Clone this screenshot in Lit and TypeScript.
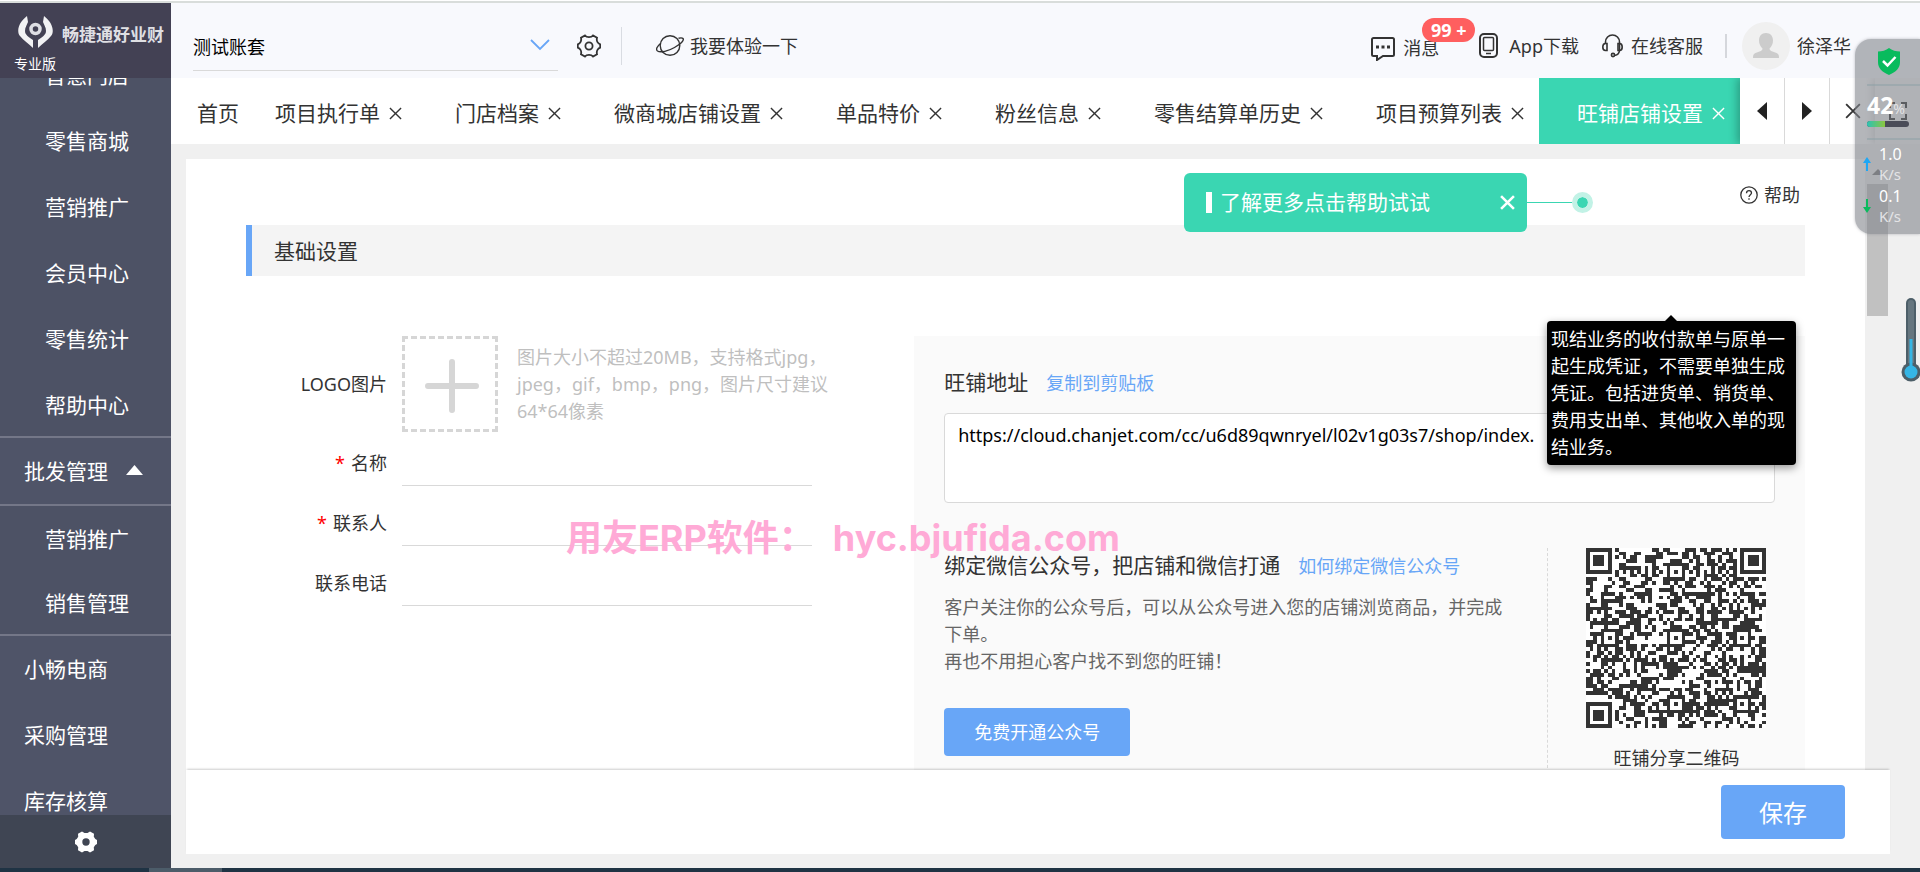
import { LitElement, html, css, svg } from "lit";
import { customElement, property, state } from "lit/decorators.js";
import { classMap } from "lit/directives/class-map.js";

const FONT = css`"Noto Sans", "Noto Sans CJK SC", sans-serif`;

const closeIcon = (size: number, weight = 1.5) => svg`
  <svg width=${size} height=${size} viewBox="0 0 14 14" fill="none" stroke="currentColor" stroke-width=${weight} aria-hidden="true">
    <path d="M1 1 13 13M13 1 1 13" />
  </svg>`;

/** Sidebar navigation, with the brand block above and the settings button below. */
@customElement("side-nav")
export class SideNav extends LitElement {
  static styles = css`
    :host {
      display: flex;
      flex-direction: column;
      flex: 0 0 171px;
      min-height: 0;
      background: #4f5468;
      color: #fff;
      font-family: ${FONT};
    }
    .brand {
      position: relative;
      z-index: 1;
      flex: 0 0 75px;
      box-sizing: border-box;
      padding: 12px 0 0 14px;
      background: #434154;
    }
    .logo {
      display: flex;
      align-items: center;
      gap: 8px;
      height: 34px;
      padding-left: 3px;
      font-size: 17px;
      line-height: 20px;
      font-weight: 700;
      color: #dfdfe3;
      white-space: nowrap;
    }
    .name {
      padding-top: 6px;
    }
    .edition {
      margin: 6px 0 0;
      font-size: 14px;
      line-height: 18px;
    }
    nav {
      flex: 1;
      min-height: 0;
      overflow: hidden;
      display: flex;
      flex-direction: column;
      justify-content: flex-end;
    }
    ul {
      list-style: none;
      margin: 0;
      padding: 0;
      flex: none;
    }
    .sub {
      background: #4d5265;
      border-bottom: 2px solid #747788;
    }
    .group {
      border-bottom: 2px solid #747788;
    }
    a {
      display: flex;
      align-items: center;
      gap: 18px;
      box-sizing: border-box;
      height: 66px;
      padding: 0 0 2px 24px;
      font-size: 21px;
      color: #fff;
      text-decoration: none;
      white-space: nowrap;
    }
    .sub a {
      height: 64px;
      padding: 0 0 0 45px;
    }
    .sub.long a {
      height: 66px;
      padding-top: 2px;
    }
    .tail {
      margin-bottom: -19px;
    }
    .settings {
      position: relative;
      flex: 0 0 53px;
      padding: 0;
      border: 0;
      background: #3f4553;
      color: #fff;
    }
    .settings svg {
      display: block;
      margin: auto;
    }
  `;

  render() {
    const link = (t: string) => html`<li><a href="#">${t}</a></li>`;
    return html`
      <div class="brand">
        <div class="logo">
          <svg width="37" height="32" viewBox="0 0 37 32" fill="none" aria-hidden="true">
            <path d="M10 0C2 6-1 15 3 20c3 4 9 8 13 12v-8c-4-3-8-5-8-9 0-4 2-6 3-9zM27 0c8 6 11 15 7 20-3 4-9 8-13 12v-8c4-3 8-5 8-9 0-4-2-6-3-9z" fill="#f2f2f4" />
            <circle cx="18.500" cy="13" r="4.500" stroke="#dedee4" stroke-width="3.500" />
          </svg>
          <span class="name">畅捷通好业财</span>
        </div>
        <p class="edition">专业版</p>
      </div>
      <nav aria-label="主导航">
        <ul class="sub long">
          ${["智慧门店", "零售商城", "营销推广", "会员中心", "零售统计", "帮助中心"].map(link)}
        </ul>
        <ul class="group">
          <li>
            <a href="#">批发管理
              <svg width="17" height="10" viewBox="0 0 17 10" aria-hidden="true"><path d="M8.500 0 17 10H0z" fill="#fff" /></svg>
            </a>
          </li>
        </ul>
        <ul class="sub">${["营销推广", "销售管理"].map(link)}</ul>
        <ul class="tail">${["小畅电商", "采购管理", "库存核算"].map(link)}</ul>
      </nav>
      <button class="settings" aria-label="设置">
        <svg width="22" height="22" viewBox="0 0 22 22" aria-hidden="true">
          <path fill="#fff" fill-rule="evenodd" d="M7 .5 9.500 2h3L15 .5l4 2.200-.2 3L20.300 8 22 9v4l-1.700 1-1.500 2.300.2 3-4 2.200-2.500-1.500h-3L7 21.500l-4-2.200.2-3L1.700 14 0 13V9l1.700-1 1.500-2.300-.2-3zM11 7.300a3.700 3.700 0 1 0 0 7.400 3.700 3.700 0 0 0 0-7.400z" />
        </svg>
      </button>
    `;
  }
}

/** Account picker and the global tools of the header. */
@customElement("top-bar")
export class TopBar extends LitElement {
  static styles = css`
    :host {
      display: flex;
      align-items: center;
      flex: 0 0 75px;
      box-sizing: border-box;
      padding: 10px 69px 0 22px;
      background: #f8f9fd;
      color: #333;
      font-family: ${FONT};
      font-size: 18px;
      line-height: 26px;
      white-space: nowrap;
    }
    .picker {
      position: relative;
      flex: 0 1 365px;
      align-self: flex-start;
      margin-top: 9px;
      display: flex;
      align-items: center;
      border-bottom: 1px solid #d9d9d9;
      box-sizing: border-box;
      height: 49px;
    }
    select {
      flex: 1;
      height: 48px;
      padding: 2px 0 0;
      border: 0;
      background: none;
      appearance: none;
      font: inherit;
      color: #000;
    }
    .picker svg {
      position: absolute;
      right: 8px;
      top: 17px;
      pointer-events: none;
    }
    button,
    a {
      display: flex;
      align-items: center;
      padding: 0;
      border: 0;
      background: none;
      font: inherit;
      color: inherit;
      text-decoration: none;
    }
    .gear {
      margin-left: 19px;
    }
    .rule {
      width: 1px;
      height: 38px;
      margin: 0 34px 0 20px;
      background: #d9dce2;
    }
    .try {
      gap: 6px;
    }
    .tools {
      display: flex;
      align-items: center;
      margin-left: auto;
    }
    .msg {
      position: relative;
      gap: 8px;
      margin-right: 40px;
      padding-top: 4px;
    }
    .badge {
      position: absolute;
      left: 51px;
      top: -13px;
      width: 53px;
      height: 24px;
      border-radius: 12px;
      background: #ff5f5f;
      color: #fff;
      font-size: 18px;
      line-height: 24px;
      font-weight: 700;
      text-align: center;
    }
    .app {
      gap: 11px;
      margin-right: 23px;
    }
    .service {
      gap: 8px;
    }
    .thin {
      width: 2px;
      height: 24px;
      margin: 0 15px 0 22px;
      background: #d5d7dc;
    }
    .user {
      gap: 7px;
    }
  `;

  render() {
    return html`
      <div class="picker">
        <select aria-label="账套"><option>测试账套</option></select>
        <svg width="20" height="12" viewBox="0 0 20 12" fill="none" stroke="#68a6f7" stroke-width="1.800" aria-hidden="true"><path d="m1 1 9 9 9-9" /></svg>
      </div>
      <button class="gear" aria-label="账套设置">
        <svg width="24" height="24" viewBox="0 0 24 24" fill="none" stroke="#333" stroke-width="1.800" aria-hidden="true">
          <path d="M8 1.500c1 1.300 2 1.600 4 1.600s3-.3 4-1.600l4 2.300c-.5 2-.3 3 .5 4.300s1.500 1.700 2.700 2.200v3.400c-1.200.5-2 1-2.700 2.200s-1 2.300-.5 4.300l-4 2.300c-1-1.300-2-1.600-4-1.600s-3 .3-4 1.600l-4-2.300c.5-2 .3-3-.5-4.300S2 14.200.8 13.700v-3.400C2 9.800 2.800 9.400 3.500 8.100s1-2.300.5-4.300z" />
          <circle cx="12" cy="12" r="3.600" />
        </svg>
      </button>
      <span class="rule"></span>
      <a class="try" href="#">
        <svg width="28" height="24" viewBox="0 0 28 24" fill="none" stroke="#333" stroke-width="1.400" aria-hidden="true">
          <circle cx="14" cy="11.500" r="9.800" />
          <path d="M4.500 9.500C1 12.500-.5 15.500 1.500 17c3 2 11 0 17-3.500S28.500 6.500 27 4.500c-.8-1-2.500-.8-4.500-.3" />
        </svg>
        我要体验一下
      </a>
      <div class="tools">
        <a class="msg" href="#">
          <svg width="24" height="26" viewBox="0 0 24 26" fill="none" stroke="#333" stroke-width="2" aria-hidden="true">
            <path d="M6 25v-4H2.500A1.500 1.500 0 0 1 1 19.500v-15A1.500 1.500 0 0 1 2.500 3h19A1.500 1.500 0 0 1 23 4.500v15a1.500 1.500 0 0 1-1.500 1.500H12z" />
            <path d="M5 12h3M10.500 12h3M16 12h3" stroke-width="3" />
          </svg>
          消息
          <span class="badge">99 +</span>
        </a>
        <a class="app" href="#">
          <svg width="19" height="25" viewBox="0 0 19 25" fill="none" stroke="#333" aria-hidden="true">
            <rect x="1" y="1" width="17" height="23" rx="4" stroke-width="2" />
            <rect x="4.500" y="4.500" width="10" height="13" rx="1" stroke-width="1.500" />
            <path d="M7 20.500h5" stroke-width="1.500" />
          </svg>
          App下载
        </a>
        <a class="service" href="#">
          <svg width="21" height="24" viewBox="0 0 21 24" fill="none" stroke="#333" stroke-width="1.600" aria-hidden="true">
            <path d="M3.500 9V8a7 7 0 0 1 14 0v8c0 3-2 5-5 5.500" />
            <path d="M5 9.500v7H3.500C1.500 16.500.8 15 .8 13s.7-3.500 2.700-3.500zM16 9.500v7h1.500c2 0 2.700-1.500 2.700-3.500s-.7-3.500-2.700-3.500z" />
            <circle cx="11" cy="21" r="1.600" />
          </svg>
          在线客服
        </a>
        <span class="thin"></span>
        <a class="user" href="#">
          <svg width="48" height="48" viewBox="0 0 48 48" aria-hidden="true">
            <circle cx="24" cy="24" r="24" fill="#f0f0f0" />
            <path d="M24 11c4.500 0 7 3 7 7.500 0 3.500-1.500 6-3.500 8 0 1.500 1 2.300 3 3l4 1.500c2 .8 2.500 2 2.500 5H11c0-3 .5-4.200 2.500-5l4-1.500c2-.7 3-1.500 3-3-2-2-3.500-4.500-3.500-8 0-4.500 2.500-7.500 7-7.500z" fill="#ccc" />
          </svg>
          徐泽华
        </a>
      </div>
    `;
  }
}

/** Strip of open pages. */
@customElement("page-tabs")
export class PageTabs extends LitElement {
  static styles = css`
    :host {
      display: flex;
      flex: 0 0 66px;
      background: #fff;
      color: #333;
      font-family: ${FONT};
      font-size: 21px;
      line-height: 30px;
      white-space: nowrap;
    }
    .list {
      display: flex;
      flex: 1;
      min-width: 0;
      overflow: hidden;
    }
    button {
      display: flex;
      align-items: center;
      justify-content: center;
      padding: 0;
      border: 0;
      background: none;
      color: inherit;
      font: inherit;
    }
    .home {
      flex: 0 0 66px;
      min-width: 0;
      justify-content: flex-start;
      padding: 4px 0 0 26px;
      box-sizing: border-box;
    }
    .tab {
      display: flex;
      align-items: center;
      flex: none;
      gap: 9px;
      padding: 4px 15px 0 38px;
    }
    .tab.active {
      background: #3ad6b2;
      color: #fff;
      flex: 1 0 auto;
    }
    .tools {
      display: flex;
      flex: none;
      box-shadow: -3px 0 8px rgba(0, 0, 0, 0.25);
      z-index: 1;
      background: #fff;
      clip-path: inset(0 0 0 -12px);
    }
    .tools button {
      width: 45px;
      border-right: 1px solid #d9d9d9;
      box-sizing: border-box;
    }
    .tools button.plain {
      border: 0;
    }
    .tools button.full {
      background: #f6f6f6;
      box-shadow: -3px 0 8px rgba(0, 0, 0, 0.15);
    }
  `;

  @state() private current = "旺铺店铺设置";

  private names = ["项目执行单", "门店档案", "微商城店铺设置", "单品特价", "粉丝信息", "零售结算单历史", "项目预算列表", "旺铺店铺设置"];

  render() {
    return html`
      <div class="list">
        <button class="home">首页</button>
        ${this.names.map(
          (name) => html`
            <div class=${classMap({ tab: true, active: name === this.current })}>
              <button @click=${() => (this.current = name)}>${name}</button>
              <button aria-label="关闭${name}">${closeIcon(13)}</button>
            </div>
          `
        )}
      </div>
      <div class="tools">
        <button aria-label="上一页"><svg width="10" height="18" viewBox="0 0 10 18"><path d="M10 0v18L0 9z" fill="#222" /></svg></button>
        <button aria-label="下一页"><svg width="10" height="18" viewBox="0 0 10 18"><path d="M0 0v18l10-9z" fill="#222" /></svg></button>
        <button class="plain" aria-label="关闭全部">${closeIcon(16, 1.6)}</button>
        <button class="plain full" aria-label="全屏">
          <svg width="18" height="18" viewBox="0 0 18 18" fill="none" stroke="#222" stroke-width="2"><path d="M1 6V1h5M12 1h5v5M17 12v5h-5M6 17H1v-5" /></svg>
        </button>
      </div>
    `;
  }
}

/** Square two-dimensional code drawn on a 49-module grid. */
@customElement("share-code")
export class ShareCode extends LitElement {
  static styles = css`
    :host {
      display: block;
      width: 180px;
      height: 180px;
      background: #fff;
    }
    svg {
      display: block;
      width: 100%;
      height: 100%;
    }
  `;

  @property({ type: Number }) seed = 20217;

  private modules(): string {
    const n = 49;
    let s = this.seed;
    const next = () => {
      s = (s * 1103515245 + 12345) % 2147483648;
      return s / 2147483648;
    };
    const grid = Array.from({ length: n }, () => Array.from({ length: n }, () => next() < 0.5));
    for (let i = 8; i < n - 8; i++) {
      grid[6][i] = i % 2 === 0;
      grid[i][6] = i % 2 === 0;
    }
    const rings = (cy: number, cx: number, reach: number, dark: (d: number) => boolean) => {
      for (let y = cy - reach; y <= cy + reach; y++)
        for (let x = cx - reach; x <= cx + reach; x++)
          if (y >= 0 && x >= 0 && y < n && x < n) grid[y][x] = dark(Math.max(Math.abs(y - cy), Math.abs(x - cx)));
    };
    for (const [y, x] of [[6, 24], [24, 6], [24, 24], [24, 42], [42, 24], [42, 42]]) rings(y, x, 2, (d) => d !== 1);
    for (const [y, x] of [[3, 3], [3, n - 4], [n - 4, 3]]) rings(y, x, 4, (d) => d < 2 || d === 3);
    let d = "";
    grid.forEach((row, y) => row.forEach((on, x) => (d += on ? `M${x} ${y}h1v1h-1z` : "")));
    return d;
  }

  render() {
    return html`<svg viewBox="0 0 49 49" shape-rendering="crispEdges" role="img" aria-label="二维码"><path d=${this.modules()} fill="#333" /></svg>`;
  }
}

/** Desktop monitor floating at the right edge. */
@customElement("system-monitor")
export class SystemMonitor extends LitElement {
  static styles = css`
    :host {
      position: absolute;
      right: 0;
      top: 39px;
      width: 65px;
      height: 195px;
      z-index: 5;
      box-sizing: border-box;
      padding: 9px 0 0 12px;
      border-radius: 16px 0 0 16px;
      background: rgba(130, 133, 140, 0.6);
      box-shadow: 0 0 3px rgba(120, 122, 130, 0.5);
      color: #fff;
      font-family: ${FONT};
      pointer-events: none;
    }
    .shield {
      display: block;
      margin-left: 11px;
    }
    .load {
      margin-top: 9px;
      padding-top: 7px;
      border-top: 2px solid rgba(140, 160, 165, 0.5);
      font-size: 23px;
      line-height: 24px;
      font-weight: 700;
      white-space: nowrap;
    }
    .unit {
      font-size: 14px;
      font-weight: 400;
      color: #e4e4e6;
    }
    .bar {
      width: 42px;
      height: 6px;
      border-radius: 3px;
      overflow: hidden;
      background: #4a4c58;
    }
    .fill {
      height: 100%;
      background: linear-gradient(90deg, #2cc3b4, #8cc63f);
    }
    .rates {
      margin-top: 11px;
      padding-top: 3px;
      border-top: 2px solid rgba(140, 160, 165, 0.5);
    }
    .rate {
      display: flex;
      align-items: center;
      gap: 8px;
      height: 42px;
      font-size: 16px;
      line-height: 20px;
    }
    .rate svg {
      margin-left: -4px;
    }
    .rate .unit {
      display: block;
      font-size: 15px;
    }
  `;

  @property({ type: Number }) load = 42;

  render() {
    const arrow = (color: string, d: string) => html`<svg width="8" height="14" viewBox="0 0 8 14" aria-hidden="true"><path d=${d} fill=${color} /></svg>`;
    return html`
      <svg class="shield" width="22" height="27" viewBox="0 0 22 27" aria-hidden="true">
        <path d="M11 0c3 2.500 7 3.500 11 3.500V14c0 6-4 10-11 13C4 24 0 20 0 14V3.500C4 3.500 8 2.500 11 0z" fill="#09bb5d" />
        <path d="m5 13 4.500 4.500L17.500 9" fill="none" stroke="#fff" stroke-width="2.500" />
      </svg>
      <div class="load">${this.load}<span class="unit">%</span></div>
      <div class="bar"><div class="fill" style="width:${this.load}%"></div></div>
      <div class="rates">
        <div class="rate">${arrow("#1ea7f5", "M4 0 8 6H5v8H3V6H0z")}<div>1.0<span class="unit">K/s</span></div></div>
        <div class="rate">${arrow("#09bb5d", "M4 14 8 8H5V0H3v8H0z")}<div>0.1<span class="unit">K/s</span></div></div>
      </div>
    `;
  }
}

/** Shop settings page: basic form on the left, shop address card on the right. */
@customElement("shop-settings")
export class ShopSettings extends LitElement {
  static styles = css`
    :host {
      display: flex;
      flex-direction: column;
      flex: 1;
      min-height: 0;
      padding: 15px 30px 14px 15px;
      background: #f0f0f0;
      color: #333;
      font-family: ${FONT};
      font-size: 18px;
      line-height: 27px;
    }
    .view {
      flex: 1;
      min-height: 0;
      display: flex;
      overflow: hidden;
    }
    .panel {
      position: relative;
      flex: 1;
      min-width: 0;
      padding: 0 60px;
      background: #fff;
    }
    .track {
      flex: 0 0 25px;
      box-sizing: border-box;
      padding: 10px 2px 0;
    }
    .track svg {
      display: block;
      margin: 0 auto 9px;
    }
    .thumb {
      height: 132px;
      background: #c1c1c1;
    }
    button {
      border: 0;
      font: inherit;
      cursor: pointer;
    }
    a {
      color: #68a6f7;
      text-decoration: none;
    }
    .helprow {
      display: flex;
      justify-content: flex-end;
      align-items: center;
      height: 66px;
      box-sizing: border-box;
      padding: 6px 5px 0 0;
    }
    .helprow a {
      display: flex;
      align-items: center;
      gap: 6px;
      color: #333;
    }
    .guide {
      position: absolute;
      top: 14px;
      right: 272px;
      z-index: 2;
      display: flex;
      align-items: center;
    }
    .bubble {
      display: flex;
      align-items: center;
      width: 343px;
      height: 59px;
      box-sizing: border-box;
      padding: 0 12px 0 22px;
      border-radius: 6px;
      background: #3ad6b2;
      color: #fff;
      font-size: 21px;
    }
    .mark {
      width: 6px;
      height: 21px;
      margin-right: 8px;
      background: #fff;
    }
    .bubble button {
      display: flex;
      margin-left: auto;
      padding: 0;
      background: none;
      color: #fff;
    }
    .wire {
      width: 45px;
      height: 1px;
      background: #3ad6b2;
    }
    .dot {
      width: 11px;
      height: 11px;
      border: 5px solid #c2f2e6;
      border-radius: 50%;
      background: #3ad6b2;
      background-clip: padding-box;
    }
    h2 {
      margin: 0;
      padding: 1px 0 0 22px;
      border-left: 6px solid #68a6f7;
      background: #f4f4f4;
      font-size: 21px;
      line-height: 50px;
      font-weight: 400;
    }
    .columns {
      display: grid;
      grid-template-columns: 3fr 4fr;
      margin-top: 60px;
    }
    .row {
      display: grid;
      grid-template-columns: 141px 1fr;
      column-gap: 15px;
      align-items: center;
    }
    .label {
      text-align: right;
    }
    .req {
      margin-right: 6px;
      color: #f00;
    }
    .upload {
      display: flex;
      align-items: center;
      gap: 19px;
    }
    .add {
      display: flex;
      align-items: center;
      justify-content: center;
      flex: none;
      box-sizing: border-box;
      width: 96px;
      height: 96px;
      padding: 3px 0 0 3px;
      border: 3px dashed #d6d6d6;
      background: none;
    }
    .hint {
      margin: 0;
      width: 325px;
      color: #bfbfbf;
    }
    .fields {
      display: grid;
      gap: 15px;
      margin-top: 9px;
    }
    input {
      width: 80%;
      height: 45px;
      box-sizing: border-box;
      padding: 0;
      border: 0;
      border-bottom: 1px solid #d9d9d9;
      outline: 0;
      background: none;
      font: inherit;
    }
    .card {
      background: #fafafa;
      padding-top: 29px;
    }
    .address {
      padding: 0 30px;
    }
    .title {
      display: flex;
      align-items: baseline;
      gap: 18px;
      height: 34px;
      line-height: 34px;
    }
    .title label,
    h3 {
      margin: 0;
      font-size: 21px;
      font-weight: 400;
    }
    textarea {
      display: block;
      width: 100%;
      height: 90px;
      box-sizing: border-box;
      margin-top: 14px;
      padding: 8px 13px;
      border: 1px solid #d9d9d9;
      border-radius: 4px;
      background: #fff;
      resize: none;
      font: inherit;
      color: #000;
      white-space: nowrap;
      overflow: hidden;
    }
    .bind {
      display: flex;
      margin-top: 45px;
    }
    .wechat {
      flex: 1;
      min-width: 0;
      padding: 0 35px 14px 30px;
    }
    .wechat p {
      margin: 12px 0 33px;
      color: #666;
    }
    .primary {
      height: 48px;
      padding: 0 30px;
      border-radius: 4px;
      background: #68a6f7;
      color: #fff;
    }
    .share {
      flex: 0 0 258px;
      box-sizing: border-box;
      border-left: 1px dashed #d9d9d9;
      display: flex;
      flex-direction: column;
      align-items: center;
      gap: 15px;
      line-height: 30px;
    }
    .tooltip {
      position: absolute;
      top: 162px;
      right: 69px;
      z-index: 3;
      width: 249px;
      box-sizing: border-box;
      padding: 5px 4px 4px;
      border-radius: 4px;
      background: #000;
      box-shadow: 0 3px 9px rgba(0, 0, 0, 0.4);
      color: #fff;
    }
    .tooltip::before {
      content: "";
      position: absolute;
      left: 118px;
      top: -6px;
      border: 6px solid transparent;
      border-top: 0;
      border-bottom-color: #000;
    }
    .actions {
      position: relative;
      z-index: 1;
      display: flex;
      align-items: center;
      justify-content: flex-end;
      flex: 0 0 84px;
      padding-right: 45px;
      background: #fff;
      box-shadow: 0 -2px 2px -1px rgba(0, 0, 0, 0.2);
    }
    .save {
      height: 54px;
      padding: 0 38px;
      font-size: 24px;
    }
  `;

  @property() url = "https://cloud.chanjet.com/cc/u6d89qwnryel/l02v1g03s7/shop/index.";

  private field(id: string, label: string, required: boolean) {
    return html`
      <div class="row">
        <label class="label" for=${id}>${required ? html`<span class="req">*</span>` : null}${label}</label>
        <div><input id=${id} type="text" ?required=${required} /></div>
      </div>
    `;
  }

  render() {
    return html`
      <div class="view">
        <section class="panel">
          <div class="helprow">
            <a href="#">
              <svg width="18" height="18" viewBox="0 0 18 18" fill="none" stroke="#333" stroke-width="1.300" aria-hidden="true">
                <circle cx="9" cy="9" r="8.200" />
                <path d="M6.500 7.200C6.500 5.500 7.500 4.600 9 4.600s2.500.9 2.500 2.300C11.500 8.600 9 8.800 9 11M9 12.300v1.400" />
              </svg>
              帮助
            </a>
          </div>
          <div class="guide">
            <div class="bubble">
              <span class="mark"></span>了解更多点击帮助试试
              <button aria-label="关闭提示">${closeIcon(15, 2.4)}</button>
            </div>
            <span class="wire"></span>
            <span class="dot"></span>
          </div>
          <h2>基础设置</h2>
          <div class="columns">
            <form>
              <div class="row">
                <label class="label" for="logo">LOGO图片</label>
                <div class="upload">
                  <button class="add" id="logo" type="button" aria-label="上传图片">
                    <svg width="54" height="54" viewBox="0 0 54 54" stroke="#d6d6d6" stroke-width="6" stroke-linecap="round" aria-hidden="true"><path d="M27 3v48M3 27h48" /></svg>
                  </button>
                  <p class="hint">图片大小不超过20MB，支持格式jpg，jpeg，gif，bmp，png，图片尺寸建议64*64像素</p>
                </div>
              </div>
              <div class="fields">
                ${this.field("name", "名称", true)} ${this.field("contact", "联系人", true)} ${this.field("phone", "联系电话", false)}
              </div>
            </form>
            <div class="card">
              <div class="address">
                <div class="title"><label for="url">旺铺地址</label><a href="#">复制到剪贴板</a></div>
                <textarea id="url" readonly .value=${this.url}></textarea>
              </div>
              <div class="bind">
                <div class="wechat">
                  <div class="title"><h3>绑定微信公众号，把店铺和微信打通</h3><a href="#">如何绑定微信公众号</a></div>
                  <p>客户关注你的公众号后，可以从公众号进入您的店铺浏览商品，并完成下单。<br />再也不用担心客户找不到您的旺铺！</p>
                  <button class="primary">免费开通公众号</button>
                </div>
                <div class="share"><share-code></share-code>旺铺分享二维码</div>
              </div>
            </div>
          </div>
          <div class="tooltip" role="tooltip">现结业务的收付款单与原单一起生成凭证，不需要单独生成凭证。包括进货单、销货单、费用支出单、其他收入单的现结业务。</div>
        </section>
        <div class="track">
          <svg width="12" height="6" viewBox="0 0 12 6" aria-hidden="true"><path d="M6 0l6 6H0z" fill="#777" /></svg>
          <div class="thumb"></div>
        </div>
      </div>
      <div class="actions"><button class="primary save">保存</button></div>
    `;
  }
}

@customElement("app-root")
export class AppRoot extends LitElement {
  static styles = css`
    :host {
      position: relative;
      display: flex;
      flex-direction: column;
      height: 100vh;
      overflow: hidden;
      box-sizing: border-box;
      background: #fff;
      font-family: ${FONT};
    }
    .edge {
      flex: 0 0 2px;
      margin-top: 1px;
      background: #d9dddb;
    }
    .shell {
      display: flex;
      flex: 1;
      min-height: 0;
    }
    .main {
      display: flex;
      flex-direction: column;
      flex: 1;
      min-width: 0;
    }
    .taskbar {
      display: flex;
      flex: 0 0 4px;
      padding-left: 149px;
      background: #1f3344;
    }
    .task {
      width: 73px;
      background: #4c5c69;
    }
    .watermark {
      position: absolute;
      left: 566px;
      top: 516px;
      z-index: 4;
      display: flex;
      gap: 18px;
      color: #ffaad6;
      font-family: "Inter", "Noto Sans CJK SC", sans-serif;
      font-size: 36px;
      line-height: 44px;
      font-weight: 700;
      white-space: nowrap;
      pointer-events: none;
    }
    .gauge {
      position: absolute;
      right: 0;
      top: 298px;
      z-index: 5;
    }
  `;

  render() {
    return html`
      <div class="edge"></div>
      <div class="shell">
        <side-nav></side-nav>
        <div class="main">
          <top-bar></top-bar>
          <page-tabs></page-tabs>
          <shop-settings></shop-settings>
        </div>
      </div>
      <div class="taskbar"><span class="task"></span></div>
      <div class="watermark"><span>用友ERP软件：</span><span>hyc.bjufida.com</span></div>
      <system-monitor></system-monitor>
      <svg class="gauge" width="19" height="84" viewBox="0 0 19 84" aria-hidden="true">
        <rect x="5" y="0" width="10" height="72" rx="5" fill="#4d5f69" />
        <rect x="7" y="2" width="6" height="66" rx="3" fill="#66767f" />
        <circle cx="10" cy="74" r="9.500" fill="#4d5f69" />
        <circle cx="10" cy="74" r="6.500" fill="#35b5e5" />
        <rect x="8.500" y="41" width="3" height="30" fill="#35b5e5" />
      </svg>
    `;
  }
}
